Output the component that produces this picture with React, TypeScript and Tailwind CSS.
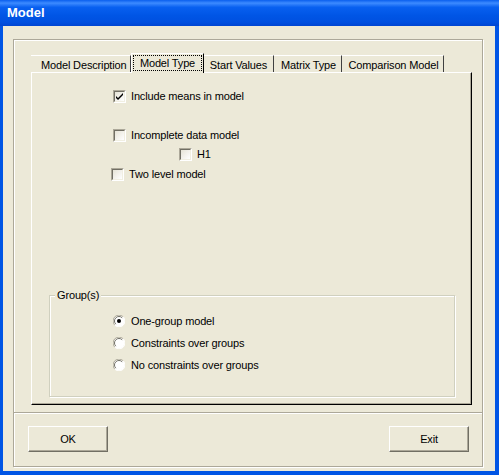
import React from "react";

const font = "font-['Liberation_Sans',Arial,sans-serif]";

function CheckBox({ checked }: { checked?: boolean }) {
  return (
    <span className="inline-flex w-[13px] h-[13px] border-t border-l border-[#ACA899] border-b-white border-r-white border-b border-r bg-white shrink-0">
      <span className="flex-1 border-t border-l border-[#716F64] border-b border-r border-b-[#F1EFE2] border-r-[#F1EFE2] bg-[linear-gradient(135deg,#E6E3D6,#ffffff)] flex items-center justify-center">
        {checked && (
          <svg width="9" height="9" viewBox="0 0 9 9">
            <path d="M1 4 L3 6 L8 1 L8 3 L3 8 L1 6 Z" fill="#000" />
          </svg>
        )}
      </span>
    </span>
  );
}

function Radio({ checked }: { checked?: boolean }) {
  return (
    <svg width="12" height="12" viewBox="0 0 12 12" className="shrink-0">
      <circle cx="6" cy="6" r="5.5" fill="#fff" />
      <path d="M10.2 1.8 A5.5 5.5 0 0 0 1.8 10.2" fill="none" stroke="#ACA899" strokeWidth="1" />
      <path d="M9.2 2.8 A4.5 4.5 0 0 0 2.8 9.2" fill="none" stroke="#716F64" strokeWidth="1" />
      <path d="M10.2 1.8 A5.5 5.5 0 0 1 1.8 10.2" fill="none" stroke="#ffffff" strokeWidth="1" />
      {checked && <circle cx="6" cy="6" r="2" fill="#000" />}
    </svg>
  );
}

function Button({ label }: { label: string }) {
  return (
    <div className="w-[80px] h-[26px] border-t border-l border-white border-b border-r border-b-[#716F64] border-r-[#716F64] shadow-[inset_-1px_-1px_0_#ACA899] bg-[#ECE9D8] flex items-center justify-center text-[11px] text-black">
      {label}
    </div>
  );
}

const tabs = [
  { label: "Model Description", w: "w-[100px]", extra: "justify-start pl-[10px]" },
  { label: "Model Type", w: "w-[73px]", selected: true, extra: "justify-center" },
  { label: "Start Values", w: "w-[70px]", extra: "justify-center" },
  { label: "Matrix Type", w: "w-[68px]", extra: "justify-center pl-[2px]" },
  { label: "Comparison Model", w: "w-[102px]", extra: "justify-center pl-[2px]" },
];

export default function App() {
  return (
    <div className={`w-[499px] h-[475px] flex flex-col bg-[#0055E5] ${font} text-[11px] tracking-[-0.15px] text-black`}>
      <div className="h-[26px] shrink-0 flex items-center pl-[7px] text-white font-bold text-[13px] tracking-normal bg-[linear-gradient(180deg,#0A5FEE_0%,#3D8BFF_12%,#0860F0_28%,#0055E5_60%,#0050E0_85%,#0046D2_100%)]">
        Model
      </div>
      <div className="flex-1 flex ml-[3px] mr-[4px] mb-[4px] bg-[#ECE9D8] pt-[13px] pl-[10px] pr-[12px] pb-[4px]">
        <div className="flex-1 flex flex-col border border-[#ACA899] shadow-[inset_1px_1px_0_#fff,1px_1px_0_#fff]">
          <div className="flex-1 flex flex-col pl-[17px] pr-[10px] pt-[13px] pb-[7px]">
            <div className="h-[19px] flex items-end shrink-0">
              {tabs.map((t) =>
                t.selected ? (
                  <div
                    key={t.label}
                    className={`${t.w} h-[20px] -mb-px relative z-10 bg-[#ECE9D8] border-t border-l border-white border-r border-r-black flex p-[1px] pb-[2px]`}
                  >
                    <div className="flex-1 border border-dotted border-black flex items-center justify-center pt-[1px]">
                      {t.label}
                    </div>
                  </div>
                ) : (
                  <div
                    key={t.label}
                    className={`${t.w} h-[17px] border-t border-white border-r border-r-[#404040] flex items-center pt-[2px] ${t.extra}`}
                  >
                    {t.label}
                  </div>
                )
              )}
            </div>
            <div className="flex-1 flex flex-col border-t border-l border-white border-r border-b border-r-black border-b-black shadow-[inset_-1px_-1px_0_#ACA899]">
              <div className="pl-[81px] pt-[17px] flex flex-col">
                <div className="flex items-center h-[13px]">
                  <CheckBox checked />
                  <span className="ml-[5px]">Include means in model</span>
                </div>
                <div className="flex items-center h-[13px] mt-[26px]">
                  <CheckBox />
                  <span className="ml-[5px]">Incomplete data model</span>
                </div>
                <div className="flex items-center h-[13px] mt-[6px] ml-[66px]">
                  <CheckBox />
                  <span className="ml-[5px]">H1</span>
                </div>
                <div className="flex items-center h-[13px] mt-[7px] -ml-[2px]">
                  <CheckBox />
                  <span className="ml-[5px]">Two level model</span>
                </div>
              </div>
              <div className="mt-auto ml-[17px] mr-[16px] mb-[7px] h-[102px] relative border border-[#D0D0BF] shadow-[inset_1px_1px_0_#fff,1px_1px_0_#fff] flex flex-col pl-[63px] pt-[19px]">
                <span className="absolute -top-[8px] left-[5px] px-[2px] bg-[#ECE9D8] leading-[14px]">Group(s)</span>
                <div className="flex items-center h-[12px]">
                  <Radio checked />
                  <span className="ml-[6px]">One-group model</span>
                </div>
                <div className="flex items-center h-[12px] mt-[10px]">
                  <Radio />
                  <span className="ml-[6px]">Constraints over groups</span>
                </div>
                <div className="flex items-center h-[12px] mt-[10px]">
                  <Radio />
                  <span className="ml-[6px]">No constraints over groups</span>
                </div>
              </div>
            </div>
          </div>
          <div className="h-[2px] shrink-0 border-t border-[#ACA899] border-b border-b-white" />
          <div className="h-[52px] shrink-0 flex items-start justify-between pt-[12px] pl-[14px] pr-[13px]">
            <Button label="OK" />
            <Button label="Exit" />
          </div>
        </div>
      </div>
    </div>
  );
}
